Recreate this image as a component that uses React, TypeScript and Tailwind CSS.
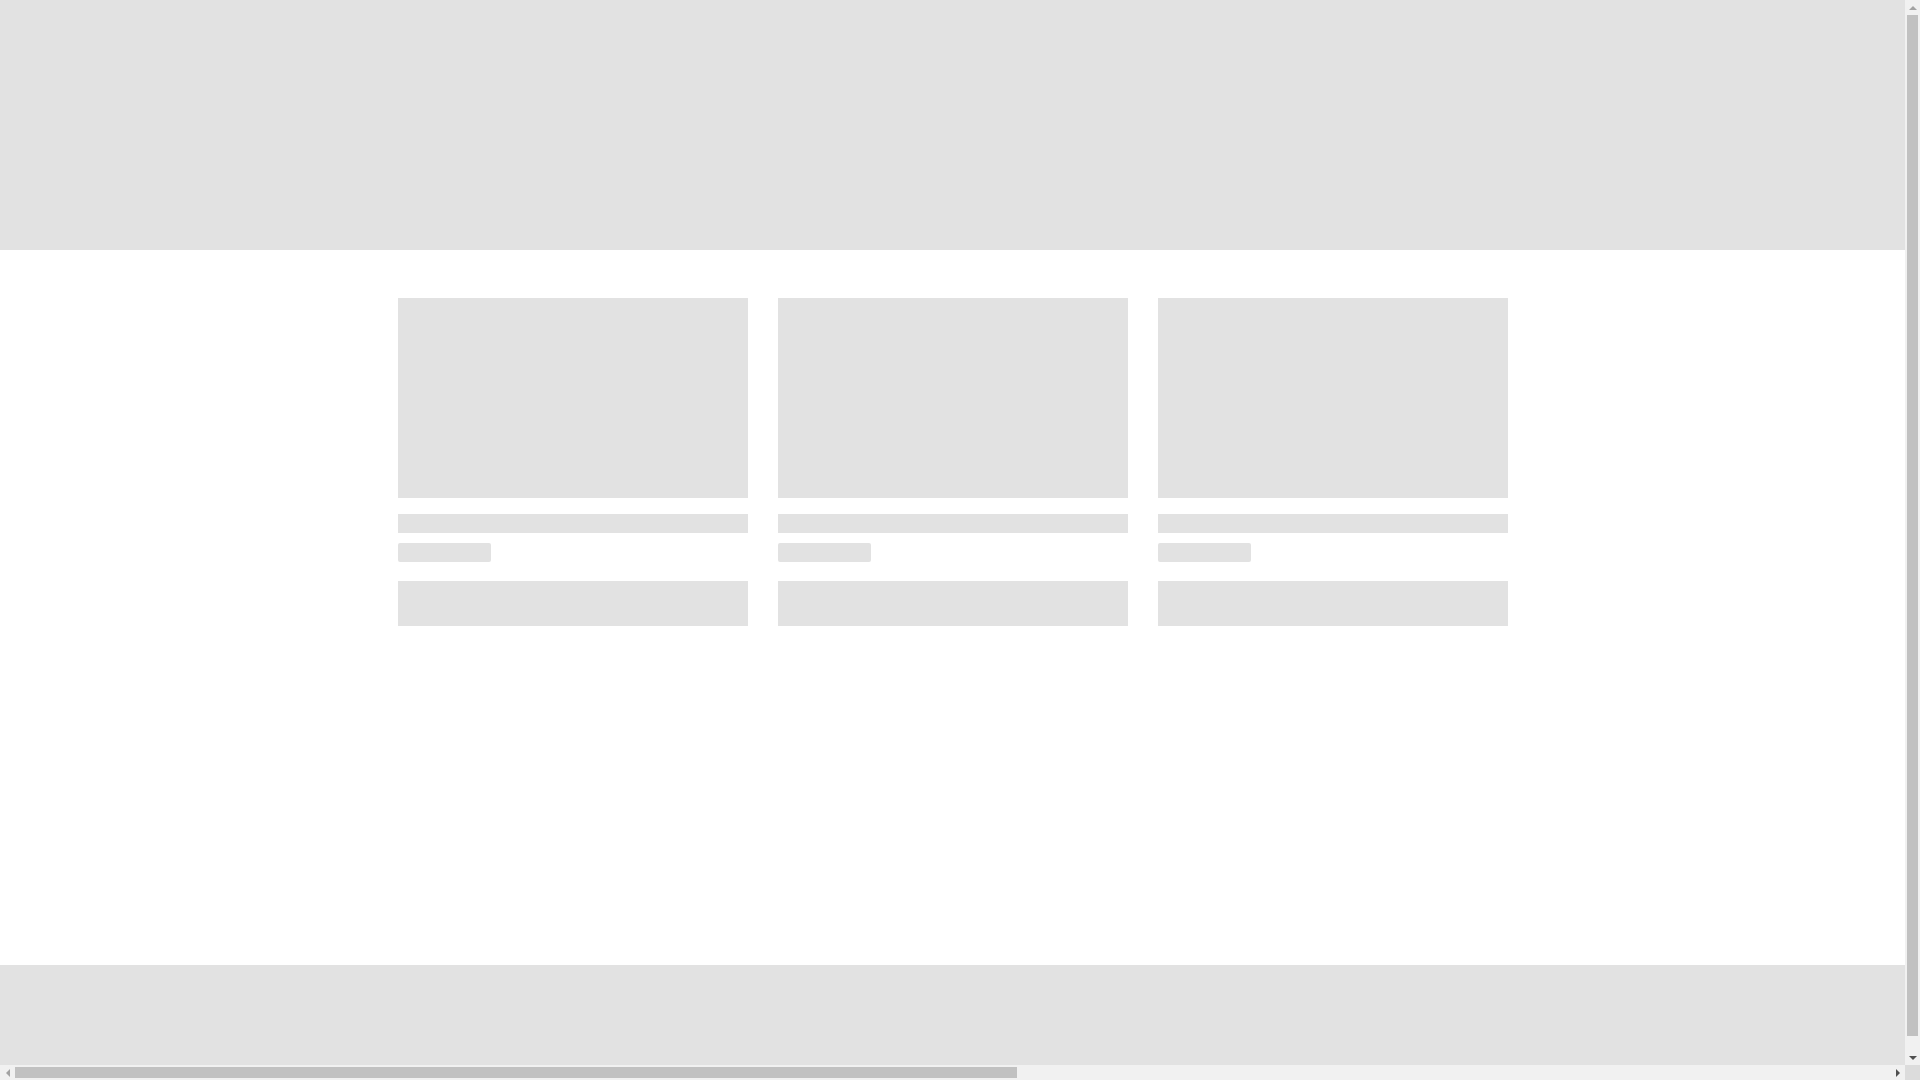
export default function App() {
  const cards = [1, 2, 3]

  return (
    <div className="h-screen w-screen flex flex-col overflow-hidden bg-white">
      <div className="flex-1 min-h-0 flex">
        {/* page, clipped to the visible window */}
        <div className="flex-1 min-w-0 overflow-hidden">
          <div className="h-[1080px] flex flex-col">
            <header className="h-[250px] shrink-0 bg-[#e2e2e2]" />

            <main className="flex-1 pt-[48px]">
              <div className="w-[1110px] mx-auto grid grid-cols-3 gap-[30px]">
                {cards.map((card) => (
                  <div key={card} className="flex flex-col">
                    <div className="h-[200px] bg-[#e2e2e2]" />
                    <div className="mt-[16px] h-[19px] bg-[#e2e2e2]" />
                    <div className="mt-[10px] h-[19px] w-[93px] rounded-[2px] bg-[#e2e2e2]" />
                    <div className="mt-[19px] h-[45px] bg-[#e2e2e2]" />
                  </div>
                ))}
              </div>
            </main>

            <footer className="h-[115px] shrink-0 bg-[#e2e2e2]" />
          </div>
        </div>

        {/* vertical scrollbar */}
        <div className="w-[15px] shrink-0 flex flex-col bg-[#f1f1f1]">
          <div className="h-[15px] flex items-center justify-center">
            <div className="w-0 h-0 border-x-4 border-x-transparent border-b-4 border-b-[#a3a3a3]" />
          </div>
          <div className="h-[1021px] mx-[2px] bg-[#c1c1c1]" />
          <div className="flex-1" />
          <div className="h-[15px] flex items-center justify-center">
            <div className="w-0 h-0 border-x-4 border-x-transparent border-t-4 border-t-[#505050]" />
          </div>
        </div>
      </div>

      {/* horizontal scrollbar */}
      <div className="h-[15px] shrink-0 flex bg-[#f1f1f1]">
        <div className="w-[15px] flex items-center justify-center">
          <div className="w-0 h-0 border-y-4 border-y-transparent border-r-4 border-r-[#a3a3a3]" />
        </div>
        <div className="w-[1002px] my-[2px] bg-[#c1c1c1]" />
        <div className="flex-1" />
        <div className="w-[15px] flex items-center justify-center">
          <div className="w-0 h-0 border-y-4 border-y-transparent border-l-4 border-l-[#505050]" />
        </div>
        <div className="w-[15px] bg-[#dcdcdc]" />
      </div>
    </div>
  )
}
